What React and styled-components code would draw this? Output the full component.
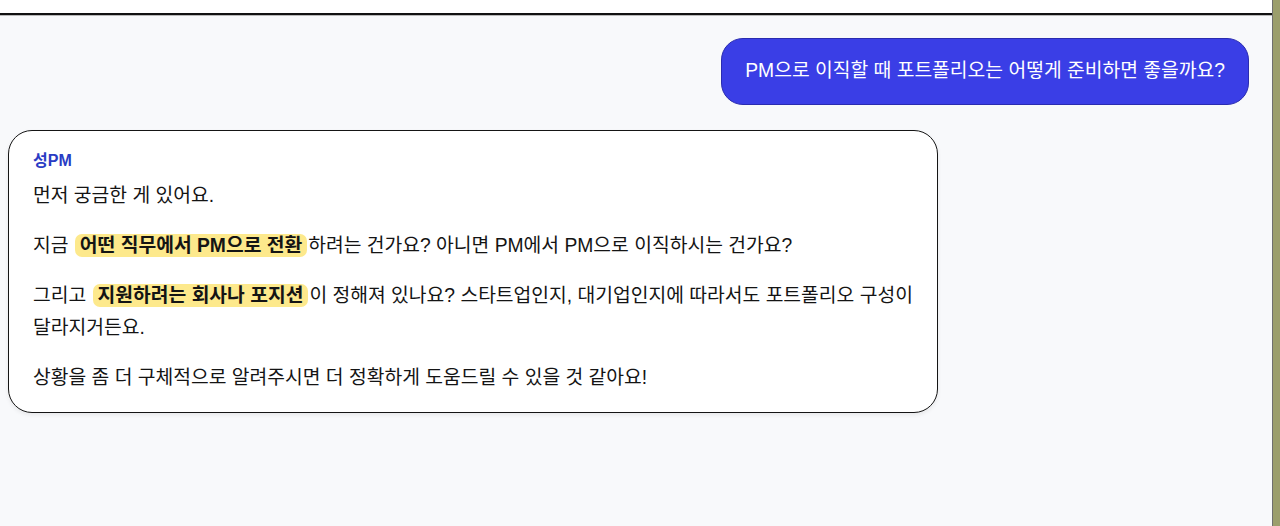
import React from 'react'
import styled, { createGlobalStyle } from 'styled-components'

const GlobalStyle = createGlobalStyle`
  html, body {
    margin: 0;
    padding: 0;
    background: #9b9e6c;
  }
  body {
    font-family: "Liberation Sans", "Noto Sans CJK KR", sans-serif;
  }
`

const Frame = styled.div`
  width: 1273px;
  height: 526px;
  background: #f8f9fb;
  border-right: 1px solid #6f6f6f;
  box-sizing: border-box;
  display: flex;
  flex-direction: column;
  overflow: hidden;
`

const TopBar = styled.div`
  height: 13px;
  flex-shrink: 0;
  background: #ffffff;
  border-bottom: 2px solid #111111;
  box-shadow: 0 1px 0 #b8b8b8;
`

const Thread = styled.div`
  display: flex;
  flex-direction: column;
  gap: 25px;
  padding: 23px 23px 0 8px;
`

const UserRow = styled.div`
  display: flex;
  justify-content: flex-end;
`

const UserBubble = styled.div`
  background: #3a3ee6;
  border: 1px solid #2a2cb0;
  color: #ffffff;
  border-radius: 22px;
  padding: 20px 23px 21px 23px;
  font-size: 19.3px;
  line-height: 24px;
`

const BotBubble = styled.div`
  width: 930px;
  box-sizing: border-box;
  background: #ffffff;
  border: 1.5px solid #151515;
  border-radius: 24px;
  box-shadow: 0 2px 4px rgba(0, 0, 0, 0.07);
  padding: 19px 24px 18px 24px;
  color: #141414;
  word-break: keep-all;
`

const Name = styled.div`
  color: #2a3cc4;
  font-weight: 700;
  font-size: 16px;
  line-height: 22px;
  margin-bottom: 8px;
`

const Para = styled.p`
  margin: 0 0 ${(p) => (p.last ? 0 : 18)}px 0;
  font-size: 19.3px;
  line-height: 32px;
`

const Mark = styled.span`
  background: #fde98c;
  border-radius: 7px;
  padding: 1px 5px;
  margin: 0 1px;
  font-weight: 700;
`

export default function App() {
  return (
    <>
      <GlobalStyle />
      <Frame>
        <TopBar />
        <Thread>
          <UserRow>
            <UserBubble>PM으로 이직할 때 포트폴리오는 어떻게 준비하면 좋을까요?</UserBubble>
          </UserRow>
          <BotBubble>
            <Name>성PM</Name>
            <Para>먼저 궁금한 게 있어요.</Para>
            <Para>
              지금 <Mark>어떤 직무에서 PM으로 전환</Mark>하려는 건가요? 아니면 PM에서 PM으로 이직하시는 건가요?
            </Para>
            <Para>
              그리고 <Mark>지원하려는 회사나 포지션</Mark>이 정해져 있나요? 스타트업인지, 대기업인지에 따라서도 포트폴리오 구성이 달라지거든요.
            </Para>
            <Para last>상황을 좀 더 구체적으로 알려주시면 더 정확하게 도움드릴 수 있을 것 같아요!</Para>
          </BotBubble>
        </Thread>
      </Frame>
    </>
  )
}
